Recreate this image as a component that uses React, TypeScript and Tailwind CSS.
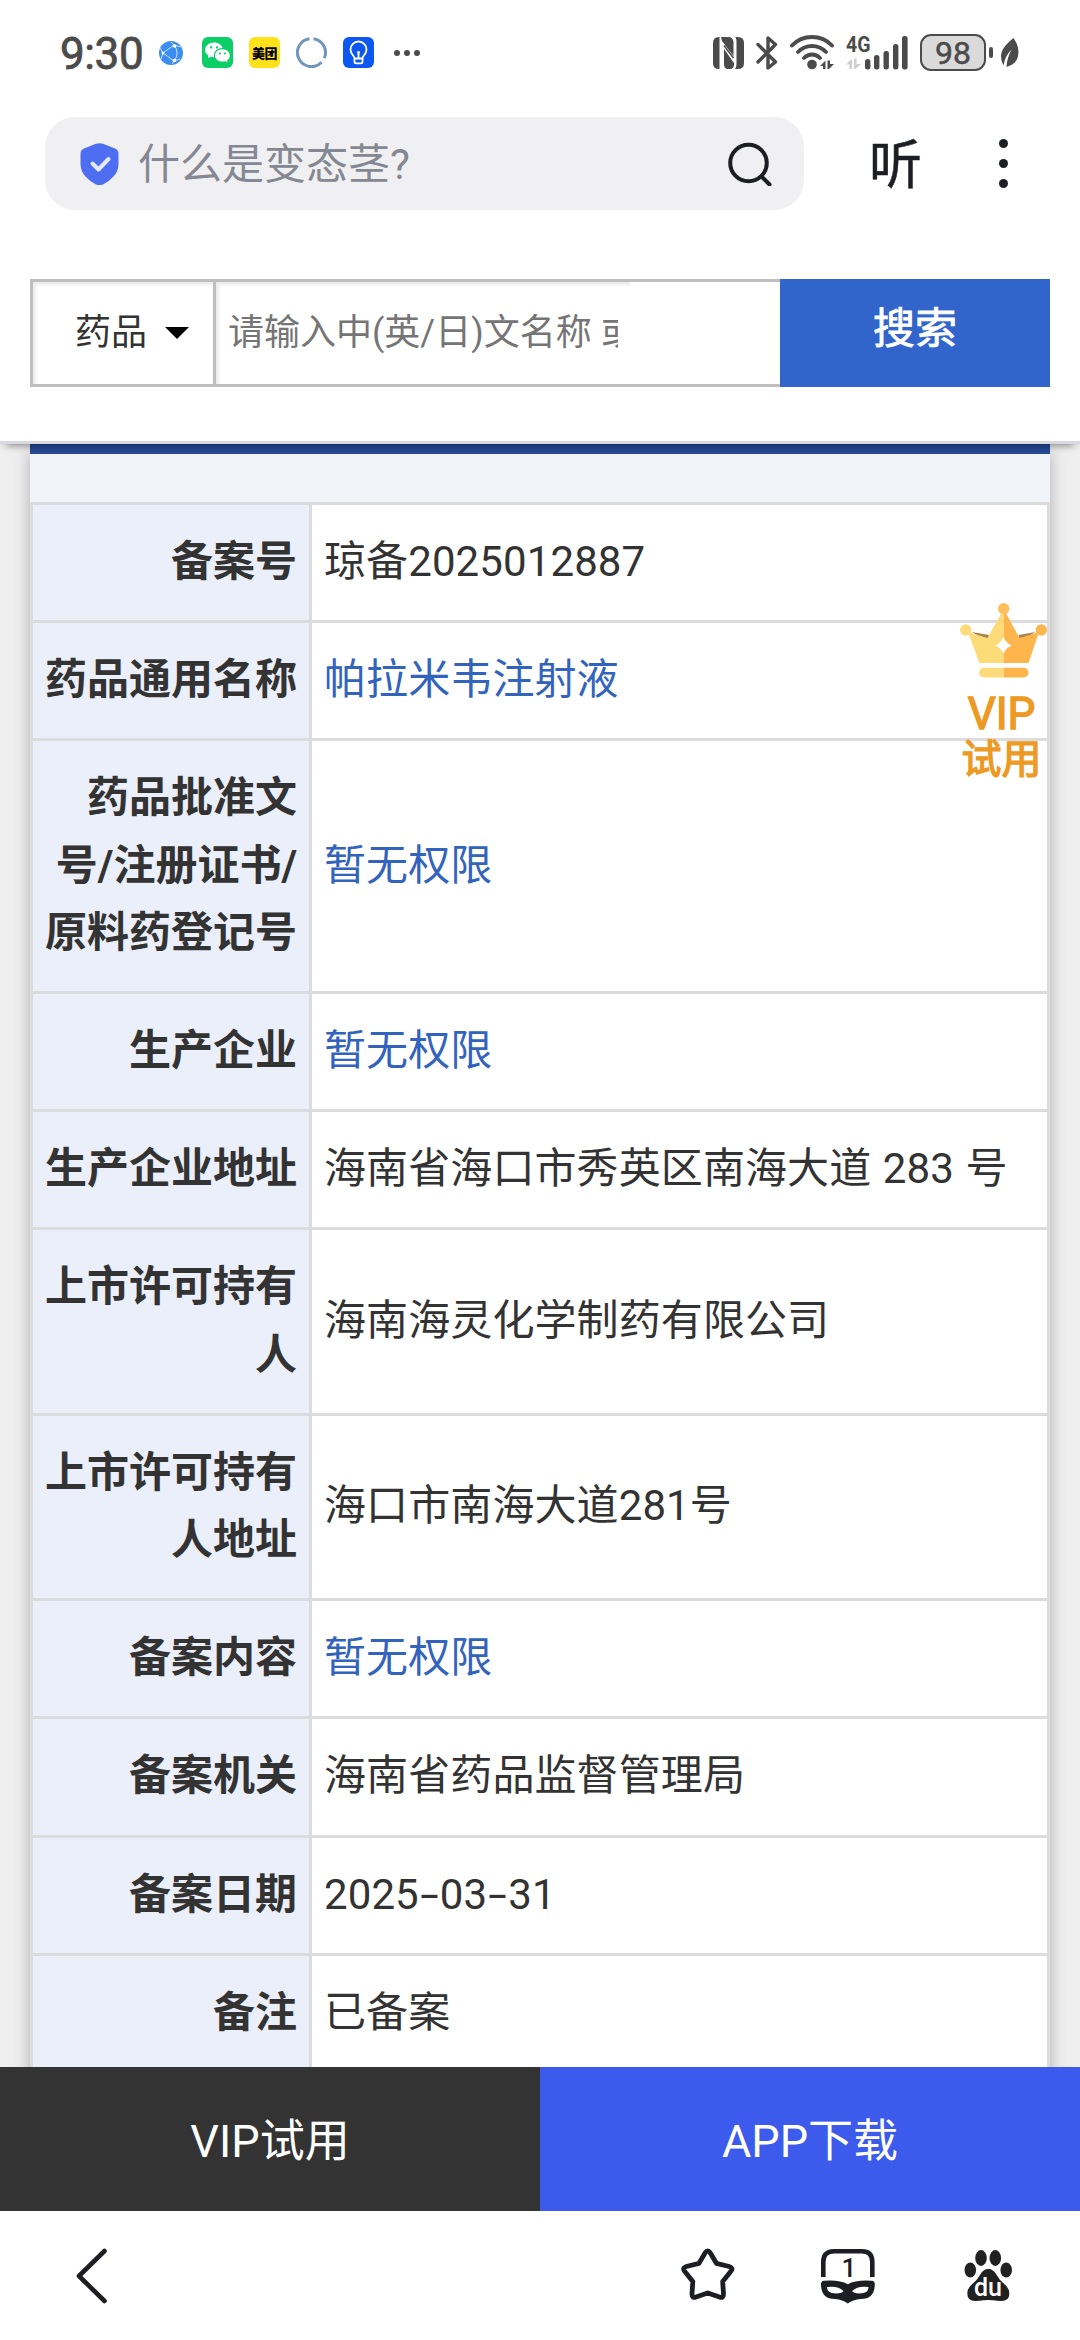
import { RiWechatFill } from 'react-icons/ri';

type Row = { label: string; value: string; link?: boolean };

const rows: Row[] = [
  { label: '备案号', value: '琼备2025012887' },
  { label: '药品通用名称', value: '帕拉米韦注射液', link: true },
  { label: '药品批准文\n号/注册证书/\n原料药登记号', value: '暂无权限', link: true },
  { label: '生产企业', value: '暂无权限', link: true },
  { label: '生产企业地址', value: '海南省海口市秀英区南海大道 283 号' },
  { label: '上市许可持有\n人', value: '海南海灵化学制药有限公司' },
  { label: '上市许可持有\n人地址', value: '海口市南海大道281号' },
  { label: '备案内容', value: '暂无权限', link: true },
  { label: '备案机关', value: '海南省药品监督管理局' },
  { label: '备案日期', value: '2025-03-31' },
  { label: '备注', value: '已备案' },
];

function GlobeIcon() {
  return (
    <svg width="24" height="24" viewBox="0 0 24 24" fill="none">
      <circle cx="12" cy="12" r="12" fill="#3b8df0" />
      <path d="M4 12 15 4M4 12l11 8M15 4c4 5 4 11 0 16M1 7l3 5-2 6M15 4l-3-3M15 4l7 2M15 20l6-2M15 20l-2 3" stroke="#dcebff" strokeWidth="0.9" />
      <circle cx="4" cy="12" r="1.5" fill="#fff" />
      <circle cx="15.5" cy="5" r="1.8" fill="#fff" />
      <circle cx="15.5" cy="19.5" r="1.8" fill="#fff" />
    </svg>
  );
}

function BulbIcon() {
  return (
    <svg width="31" height="31" viewBox="0 0 31 31" fill="none" stroke="#fff" strokeWidth="1.8">
      <rect width="31" height="31" rx="6" fill="#0b57f0" stroke="none" />
      <path d="M11.5 21.5c0-3-4-4-4-9a8 8 0 0 1 16 0c0 5-4 6-4 9z" />
      <path d="M11.5 21.5v3.2q0 1.6 1.6 1.6h4.8q1.6 0 1.6-1.6v-3.2M15.5 16v6" />
      <circle cx="15.5" cy="15.5" r="1.4" fill="#fff" stroke="none" />
    </svg>
  );
}

function NfcIcon() {
  return (
    <svg width="31" height="32" viewBox="0 0 31 32">
      <path d="M6 0h.5v32H6q-6 0-6-6V6q0-6 6-6zM8 0h7q5 0 5.500 5v14L9 4zM11 12l10 14q.5 5-3 6h-3q-4 0-4-5zM22.500 0h2.500q6 0 6 6v20q0 6-6 6h-3q1.500-2 1.500-5V6q0-4-1-6z" fill="#4b4b4b" />
      <path d="M11 8.500 20.500 21" stroke="#4b4b4b" strokeWidth="1.500" />
    </svg>
  );
}

function BluetoothIcon() {
  return (
    <svg width="22" height="34" viewBox="0 0 22 34" fill="none" stroke="#4b4b4b" strokeWidth="3.4" strokeLinejoin="round" strokeLinecap="round">
      <path d="M2 8.500 19.500 26 12 32V20.500M2 26 19.500 8.500 12 2v12" />
    </svg>
  );
}

function WifiIcon() {
  return (
    <svg width="45" height="35" viewBox="0 0 45 35" fill="none" stroke="#4b4b4b" strokeWidth="3.800" strokeLinecap="round">
      <path d="M2 10.500q8-8.500 20-8.500t20 8.500M8 17q6-6 14-6t14 6M14 23q3.500-3.500 8-3.500t8 3.500" />
      <circle cx="22" cy="29.500" r="4.800" fill="#4b4b4b" stroke="none" />
      <path d="M30 31l5.500-5.500V34H33v-3zM37.500 25.500H40V29h4l-5 5h-1.500z" fill="#4b4b4b" stroke="none" />
    </svg>
  );
}

function SignalIcon() {
  return (
    <svg width="63" height="35" viewBox="0 0 63 35" fill="#4b4b4b">
      <text x="0" y="17" fontSize="22.500" fontWeight="700" textLength="24.500" lengthAdjust="spacingAndGlyphs">
        4G
      </text>
      <path d="M0 29.500l6-6V34H3.500v-4.500zM8 23.500h2.500V29H15l-5.500 5H8z" fill="#cfcfcf" />
      <rect x="19" y="24" width="5.400" height="10.500" rx="2.500" />
      <rect x="28" y="20" width="5.400" height="14.500" rx="2.500" />
      <rect x="37.500" y="16" width="5.400" height="18.500" rx="2.500" />
      <rect x="47" y="9" width="5.400" height="25.500" rx="2.500" />
      <rect x="56" y="1" width="5.600" height="33.500" rx="2.500" />
    </svg>
  );
}

function LeafIcon() {
  return (
    <svg width="18" height="29" viewBox="0 0 18 29">
      <path d="M12.500 0C4 7 0 12 0 19q0 4 2.500 8.500Q4 18 10.500 11.500 6 20 5.500 29 17.500 26 17.500 14q0-7-5-14z" fill="#4b4b4b" />
    </svg>
  );
}

function StatusBar() {
  return (
    <div className="flex h-[105px] items-center justify-between pr-[61px] pl-[60px]">
      <div className="flex items-center">
        <span className="w-[99px] pt-[3px] text-[44px] leading-none tracking-[-0.4px] text-[#4b4b4b] [-webkit-text-stroke:0.8px_#4b4b4b]">
          9:30
        </span>
        <GlobeIcon />
        <span className="ml-[19px] flex size-[31px] items-center justify-center rounded-[6px] bg-[#0bcf66]">
          <RiWechatFill className="size-[27px] text-white" />
        </span>
        <span className="ml-4 flex size-[31px] items-center justify-center rounded-[6px] bg-[#ffe11c] pt-[2px] text-[13px] leading-none font-black tracking-[-0.5px] text-black">
          美团
        </span>
        <svg className="ml-4" width="31" height="31" viewBox="0 0 31 31" fill="none" stroke="#7096bd" strokeWidth="3">
          <path d="M17.500 1.700a14 14 0 0 1 10.800 19.500M25.500 25.300A14 14 0 1 1 13.500 1.700" />
        </svg>
        <span className="ml-4">
          <BulbIcon />
        </span>
        <span className="ml-5 flex gap-1">
          <i className="size-[6px] rounded-full bg-[#4b4b4b]" />
          <i className="size-[6px] rounded-full bg-[#4b4b4b]" />
          <i className="size-[6px] rounded-full bg-[#4b4b4b]" />
        </span>
      </div>
      <div className="flex items-center">
        <NfcIcon />
        <span className="ml-3">
          <BluetoothIcon />
        </span>
        <span className="ml-3">
          <WifiIcon />
        </span>
        <span className="ml-[11px]">
          <SignalIcon />
        </span>
        <span className="ml-[11px] flex h-[37px] w-[66px] items-center justify-center rounded-[11px] border-[2.500px] border-[#4b4b4b] bg-[#dadada] pt-px text-[32px] leading-none text-[#4b4b4b] [-webkit-text-stroke:0.5px_#4b4b4b]">
          98
        </span>
        <i className="ml-[3px] h-[11px] w-1 rounded-[2px] bg-[#4b4b4b]" />
        <span className="ml-2">
          <LeafIcon />
        </span>
      </div>
    </div>
  );
}

function BrowserBar() {
  return (
    <div className="flex items-center pt-3 pr-[72px] pl-[45px]">
      <div className="flex h-[93px] w-[759px] items-center rounded-[30px] bg-[#f0f0f3] pr-8 pl-[35px]">
        <svg width="39" height="42" viewBox="0 0 39 42" fill="none">
          <path d="M16 .8q3.500-1.200 7 0l12 4.600q3.500 1.600 3.500 5V21q0 7-5 12.500-5 5.500-10.500 8-3.500 1.200-7 0Q10.500 39 5.500 33.500.5 28 .5 21V10.400q0-3.400 3.500-5z" fill="#4e6ef2" />
          <path d="M12.500 20.500l6 6L28.500 16" stroke="#e4e9fb" strokeWidth="4" strokeLinecap="round" strokeLinejoin="round" />
        </svg>
        <span className="ml-[19px] flex-1 pt-[3px] text-[42px] leading-none text-[#858792]">什么是变态茎?</span>
        <svg width="44" height="44" viewBox="0 0 44 44" fill="none" stroke="#1d1e23" strokeWidth="4" strokeLinecap="round">
          <circle cx="20.500" cy="21" r="18.300" />
          <path d="M34 35l7.500 7.500" />
        </svg>
      </div>
      <span className="ml-[65px] pt-[5px] text-[53px] leading-none text-[#1d1e23] [-webkit-text-stroke:0.5px_#1d1e23]">听</span>
      <span className="ml-auto flex flex-col gap-[11px]">
        <i className="size-[9px] rounded-full bg-[#1d1e23]" />
        <i className="size-[9px] rounded-full bg-[#1d1e23]" />
        <i className="size-[9px] rounded-full bg-[#1d1e23]" />
      </span>
    </div>
  );
}

function SearchForm() {
  return (
    <div className="flex px-[30px] pt-[69px] pb-[54px]">
      <div className="flex h-[108px] w-[750px] border-[3px] border-r-0 border-[#bfbfbf]">
        <div className="flex w-[183px] items-center border-r-[3px] border-[#bfbfbf] pl-[42px] shadow-[inset_3px_3px_3px_#ececec]">
          <span className="pb-px text-[36px] leading-none text-[#333]">药品</span>
          <svg className="ml-[18px]" width="24" height="12" viewBox="0 0 24 12">
            <path d="M0 0h24L12 12z" />
          </svg>
        </div>
        <div className="flex w-[414px] items-center pr-3 pb-px pl-3 shadow-[inset_3px_3px_3px_#ececec]">
          <span className="overflow-hidden py-2 text-[36px] leading-none whitespace-nowrap text-[#757575]">
            请输入中(英/日)文名称 或企业
          </span>
        </div>
      </div>
      <button className="h-[108px] flex-1 bg-[#3165cb] pb-2 text-[42px] leading-none text-white [-webkit-text-stroke:0.8px_#fff]">
        搜索
      </button>
    </div>
  );
}

function VipBadge() {
  return (
    <div className="absolute top-[603px] left-[960px] flex w-[87px] flex-col items-center text-[#ed9a25] [-webkit-text-stroke:1.4px_#ed9a25]">
      <svg width="87" height="75" viewBox="0 0 87 75">
        <path d="M12 29l17 3-2 6zM75.500 29l-17 3 2 6z" fill="#a9824f" />
        <path d="M8 29l19.500 6L43.700 6v54H19.300z" fill="#fddb78" />
        <path d="M79 29l-19.500 6L43.700 6v54h24.800z" fill="#fdb54c" />
        <circle cx="5.700" cy="27" r="5.700" fill="#fddb78" />
        <circle cx="81.300" cy="27" r="5.700" fill="#fdb54c" />
        <circle cx="43.700" cy="5.700" r="5.700" fill="#fdc05c" />
        <path d="M43.500 34q2.500 6 8 8.500-5.500 2.500-8 8-2.500-5.500-8-8 5.500-2.500 8-8.500z" fill="#fff" />
        <path d="M43.700 64.700v9.800H24a4.900 4.900 0 0 1 0-9.800z" fill="#fddb78" />
        <path d="M43.700 64.700v9.800h20a4.900 4.900 0 0 0 0-9.800z" fill="#fdb54c" />
      </svg>
      <span className="mt-[13px] mr-1 text-[44px] leading-[46px]">VIP</span>
      <span className="mr-1 text-[40px] leading-[46px]">试用</span>
    </div>
  );
}

// Hyphens are drawn wider than the font's own glyph
function CellValue({ text }: { text: string }) {
  return (
    <span className="whitespace-pre">
      {text.split(/(-)/).map((part, i) =>
        part === '-' ? (
          <span key={i} className="inline-block w-[21px] scale-x-[1.6] text-center">
            -
          </span>
        ) : (
          part
        )
      )}
    </span>
  );
}

function DetailTable() {
  return (
    <div className="flex-1 overflow-hidden bg-[#efefef] px-[30px]">
      <div className="border-t-[10px] border-[#264a95] bg-[#f0f4f8] pt-12 shadow-[0_9px_15px_rgba(0,0,0,0.28)]">
        <div className="border-x-[3px] border-t-[3px] border-[#dcdcde] bg-white text-[42px] leading-[67.200px] [word-spacing:1px]">
          {rows.map((row) => (
            <div key={row.label} className="flex border-b-[3px] border-[#dcdcde]">
              <div className="w-[279px] shrink-0 border-r-[3px] border-[#dcdcde] bg-[#ebeffa] px-3 pt-[23px] pb-[25px] text-right font-bold whitespace-pre text-[#333]">
                {row.label}
              </div>
              <div
                className={`flex flex-1 items-center px-3 pt-[23px] pb-[25px] tracking-[0.1px] ${
                  row.link ? 'text-[#3263bd]' : 'text-[#333]'
                }`}
              >
                <CellValue text={row.value} />
              </div>
            </div>
          ))}
        </div>
      </div>
    </div>
  );
}

function BottomNav() {
  return (
    <div className="flex h-[129px] items-center bg-white pr-[66px] pl-[76px]">
      <svg width="32" height="56" viewBox="0 0 32 56" fill="none" stroke="#1d1e23" strokeWidth="4.600" strokeLinecap="round" strokeLinejoin="round">
        <path d="M28.500 3 3 28l25.500 25" />
      </svg>
      <svg className="-mt-[2px] ml-auto" width="60" height="60" viewBox="0 0 60 60" fill="none" stroke="#1d1e23" strokeWidth="4.800" strokeLinejoin="round">
        <path d="M28.200 7.800q2.500-4 5 0l6.200 10.500 12.800 3.200q4.500 1.500 1.500 5l-8 10 .8 12.500q0 4.500-4 3L30.700 48 19 52q-4 1.500-4-3l.8-12.500-8-10q-3-3.500 1.500-5L22 18.300z" />
      </svg>
      <svg className="ml-[83px]" width="58" height="60" viewBox="0 0 58 60">
        <path d="M3.300 31V16Q3.300 5.300 14 5.300h27.700q10.600 0 10.600 10.700v15" fill="none" stroke="#1d1e23" strokeWidth="4.600" />
        <text x="29" y="31" fontSize="26" textAnchor="middle" fontWeight="500" fill="#1d1e23">
          1
        </text>
        <path
          fillRule="evenodd"
          d="M4 34.800q15-1.300 23.800 3.400 8.800-4.700 24-3.400 3 .2 3 3.200 0 15-14 15-8 .5-13 4.500-5-4-13-4.500Q1 53 1 38q0-3 3-3.200zM7 41q0 6.500 9 6.500 6.500-.2 7.500-2.500Q18 39.500 7 41zM48.600 41q0 6.500-9 6.500-6.500-.2-7.500-2.500 5.500-5.500 16.500-4z"
          fill="#1d1e23"
        />
      </svg>
      <svg className="ml-[84px]" width="52" height="56" viewBox="0 0 52 56" fill="#212121">
        <ellipse cx="19" cy="10" rx="5.800" ry="7.900" />
        <ellipse cx="33.300" cy="10" rx="5.800" ry="7.900" />
        <ellipse cx="8.300" cy="22" rx="5.800" ry="7.400" />
        <ellipse cx="44.200" cy="22" rx="5.800" ry="7.400" />
        <path d="M26.300 21q5 0 8 5.500t8 9.500q5 4 5 9.500 0 7.500-8 7.500-5 0-8-.7-5-.8-10 0-3 .7-8 .7-8 0-8-7.500 0-5.500 5-9.500 5-4 8-9.500t8-5.500z" />
        <text x="26" y="48" fontSize="25" fontWeight="500" textAnchor="middle" fill="#fff">
          du
        </text>
      </svg>
    </div>
  );
}

export default function App() {
  return (
    <div className="relative flex h-[2340px] w-[1080px] flex-col overflow-hidden bg-white font-[Roboto,'Noto_Sans_CJK_SC',sans-serif]">
      {/* Fixed header */}
      <div className="relative z-10 border-b-[3px] border-[#d9dadf] bg-white shadow-[0_7px_8px_-6px_rgba(0,0,0,0.5)]">
        <StatusBar />
        <BrowserBar />
        <SearchForm />
      </div>

      <DetailTable />

      {/* Call to action bar */}
      <div className="relative grid h-36 grid-cols-2 text-[45px] leading-none text-white">
        <div className="flex items-center justify-center bg-[#333] pt-1">VIP试用</div>
        <div className="flex items-center justify-center bg-[#3c5aec] pt-1">APP下载</div>
      </div>

      <BottomNav />
      <VipBadge />
    </div>
  );
}
